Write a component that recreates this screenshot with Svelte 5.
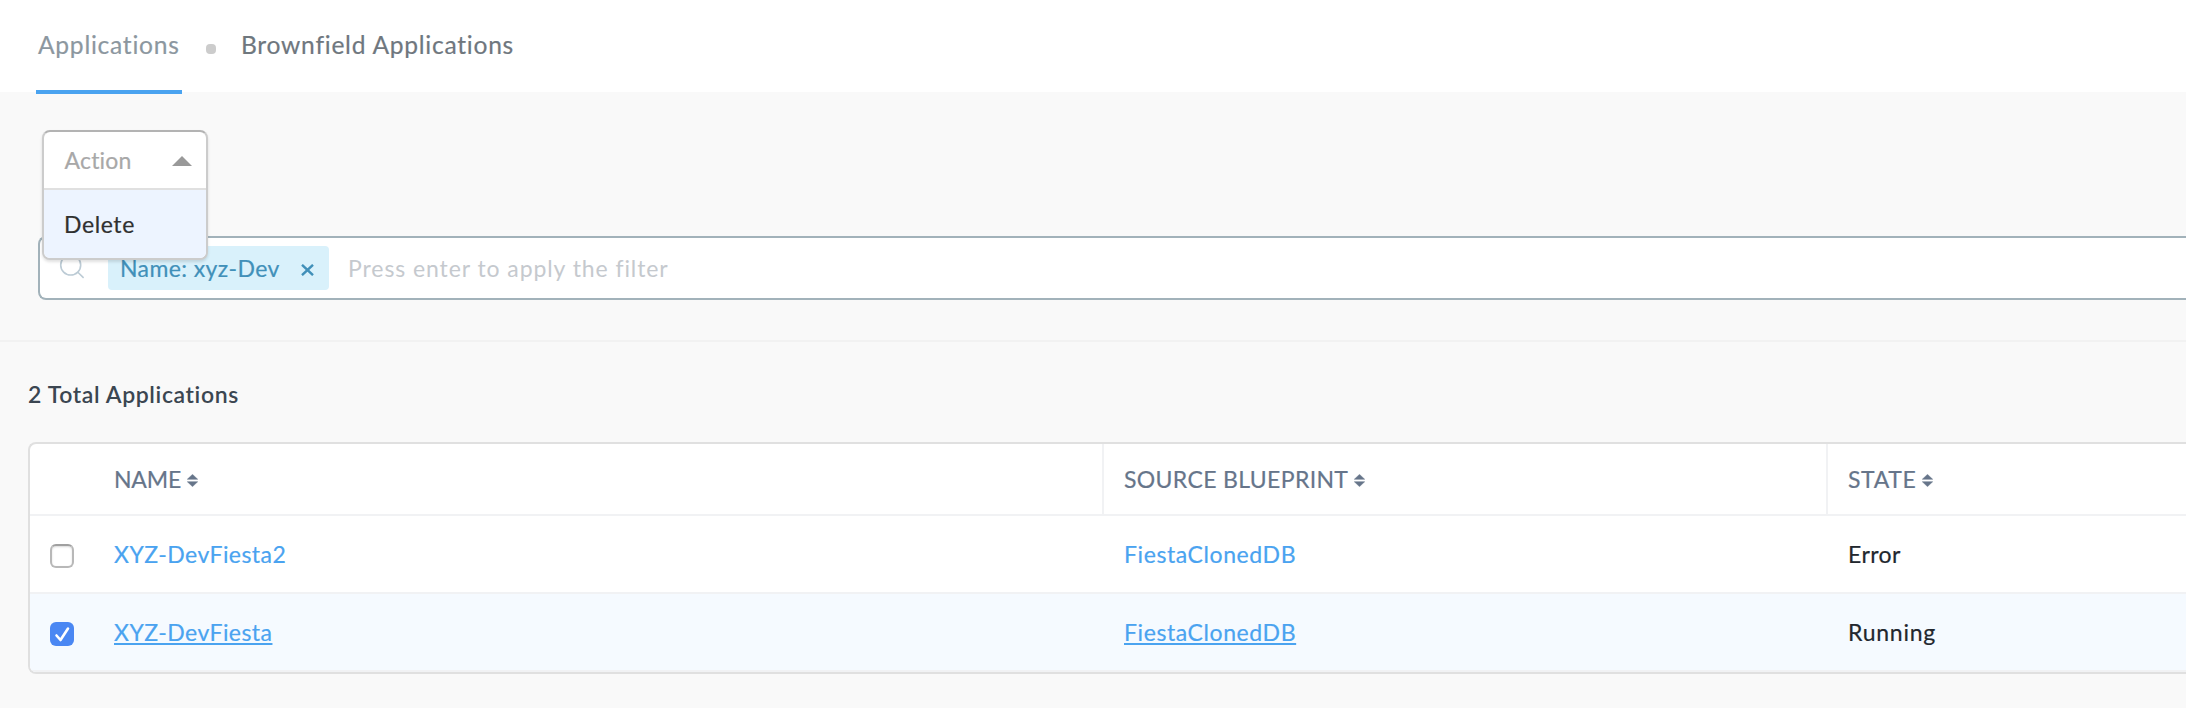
<script>
  const columns = [
    { key: 'name', label: 'NAME' },
    { key: 'blueprint', label: 'SOURCE BLUEPRINT' },
    { key: 'state', label: 'STATE' }
  ];
  let rows = $state([
    { name: 'XYZ-DevFiesta2', blueprint: 'FiestaClonedDB', state: 'Error', checked: false },
    { name: 'XYZ-DevFiesta', blueprint: 'FiestaClonedDB', state: 'Running', checked: true }
  ]);
</script>

<main>
  <nav>
    <a class="tab active">Applications</a>
    <i class="dot"></i>
    <a class="tab">Brownfield Applications</a>
  </nav>

  <section class="filters">
    <div class="action">
      <div class="trigger"><span>Action</span><svg width="20" height="10" viewBox="0 0 20 10"><path d="M10 0 20 10H0z" fill="#999" /></svg></div>
      <div class="option">Delete</div>
    </div>
    <div class="search">
      <svg class="glass" width="26" height="26" viewBox="0 0 26 26" fill="none" stroke="#bccbd5" stroke-width="1.6"><circle cx="11.7" cy="10" r="10" /><path d="m18.6 17 6 5.8" /></svg>
      <div class="chip"><span>Name: xyz-Dev</span><svg width="13" height="12" viewBox="0 0 13 12" stroke="#4190b9" stroke-width="2.4"><path d="m1 .8 11 10.4M12 .8 1 11.2" /></svg></div>
      <span class="placeholder">Press enter to apply the filter</span>
    </div>
  </section>

  <section class="results">
    <h2>2 Total Applications</h2>
    <div class="table">
      <div class="row head">
        <div class="check"></div>
        {#each columns as c}
          <div class="cell {c.key}"><span>{c.label}</span><svg class="sort" width="11" height="13" viewBox="0 0 11 13" fill="#66758a" stroke="#66758a" stroke-width=".6" stroke-linejoin="round"><path d="M5.5.4 10.6 5.2H.4zM.4 7.8h10.2L5.5 12.6z" /></svg></div>
        {/each}
      </div>
      {#each rows as r}
        <div class="row" class:selected={r.checked}>
          <div class="check">
            <span class="box" class:on={r.checked}>
              {#if r.checked}<svg width="24" height="24" viewBox="0 0 24 24" fill="none" stroke="#fff" stroke-width="2.6" stroke-linecap="round" stroke-linejoin="round"><path d="m6.5 13.5 4 4.5L18 6.5" /></svg>{/if}
            </span>
          </div>
          <div class="cell name"><a class="link">{r.name}</a></div>
          <div class="cell blueprint"><a class="link">{r.blueprint}</a></div>
          <div class="cell state"><span>{r.state}</span></div>
        </div>
      {/each}
    </div>
  </section>
</main>

<style>
  :global(body) { margin: 0; background: #f9f9f9; }
  * { box-sizing: border-box; }
  main { height: 708px; overflow: hidden; background: #f9f9f9; font: 400 23px/40px Lato, "Open Sans", sans-serif; font-variant-ligatures: none; letter-spacing: .45px; -webkit-text-stroke: .2px; color: #22272e; white-space: nowrap; }
  nav { height: 92px; background: #fff; display: flex; padding-left: 36px; font-size: 24.6px; line-height: 90px; letter-spacing: .74px; }
  .tab { height: 94px; color: #6f777e; }
  .tab.active { width: 146px; padding-left: 2px; border-bottom: 4px solid #4aa3f0; color: #8c979f; }
  .dot { width: 10px; height: 10px; border-radius: 4px; background: #ccc; margin: 44px 25px 0 24px; }
  .filters { height: 250px; padding: 38px 0 0 38px; border-bottom: 2px solid #f2f2f2; }
  .action { position: relative; z-index: 1; width: 166px; height: 130px; margin-left: 4px; border: 2px solid #ccc; border-top-color: #b3b3b3; border-radius: 8px; background: #fff; box-shadow: 0 2px 3px rgba(0,0,0,.12); overflow: hidden; }
  .trigger { height: 58px; border-bottom: 2px solid #e0e0e0; padding: 0 14px 0 20.5px; display: flex; align-items: center; justify-content: space-between; color: #a8a8a8; letter-spacing: .2px; }
  .trigger svg { margin-top: 2px; }
  .option { height: 68px; padding-left: 20px; line-height: 68px; background: #edf4ff; color: #303030; letter-spacing: .6px; }
  .search { height: 64px; margin-top: -24px; border: 2px solid #a2b2ba; border-right: 0; border-radius: 8px 0 0 8px; background: #fff; display: flex; align-items: center; }
  .glass { margin: 0 23px 0 19px; overflow: visible; }
  .chip { width: 221px; height: 44px; padding: 0 15px 0 12px; border-radius: 4px; background: #d9f1fb; color: #4190b9; display: flex; align-items: center; justify-content: space-between; letter-spacing: .4px; }
  .chip svg { margin-top: 4px; }
  .placeholder { margin-left: 19px; color: #c5c9ce; letter-spacing: .92px; -webkit-text-stroke: 0; }
  .results { padding: 32px 0 0 28px; }
  h2 { margin: 0 0 28px; font-size: 23px; line-height: 40px; font-weight: 600; letter-spacing: .63px; -webkit-text-stroke: 0; color: #3b4651; }
  .table { height: 232px; border: 2px solid #e0e0e0; border-right: 0; border-radius: 8px 0 0 8px; background: #fff; overflow: hidden; }
  .row { height: 78px; display: grid; grid-template-columns: 64px 1010px 724px 1fr; border-bottom: 2px solid #f1f2f4; align-items: stretch; }
  .row.head { height: 72px; color: #66758a; letter-spacing: .35px; }
  .row.selected { background: #f5faff; }
  .cell { padding-left: 20px; display: flex; align-items: center; }
  .head .name, .head .blueprint { border-right: 2px solid #f1f2f4; }
  .head .name { letter-spacing: -.2px; }
  .row:not(.head) .blueprint { letter-spacing: .59px; }
  .head .state { letter-spacing: .6px; }
  .selected .state { letter-spacing: .75px; }
  .sort { flex: none; margin: 2px 0 0 6px; }
  .check { padding: 28px 0 0 20px; }
  .box { display: block; width: 24px; height: 24px; border: 2px solid #b8b8b8; border-top-color: #a0a0a0; border-radius: 6px; background: #fff; box-shadow: inset 0 1px 2px rgba(0,0,0,.15); }
  .box.on { border: 0; background: #4a87f3; box-shadow: none; }
  .box svg { display: block; }
  .link { color: #4aa3f0; }
  .selected .link { text-decoration: underline; text-decoration-thickness: 2px; text-underline-offset: 2px; }
</style>
